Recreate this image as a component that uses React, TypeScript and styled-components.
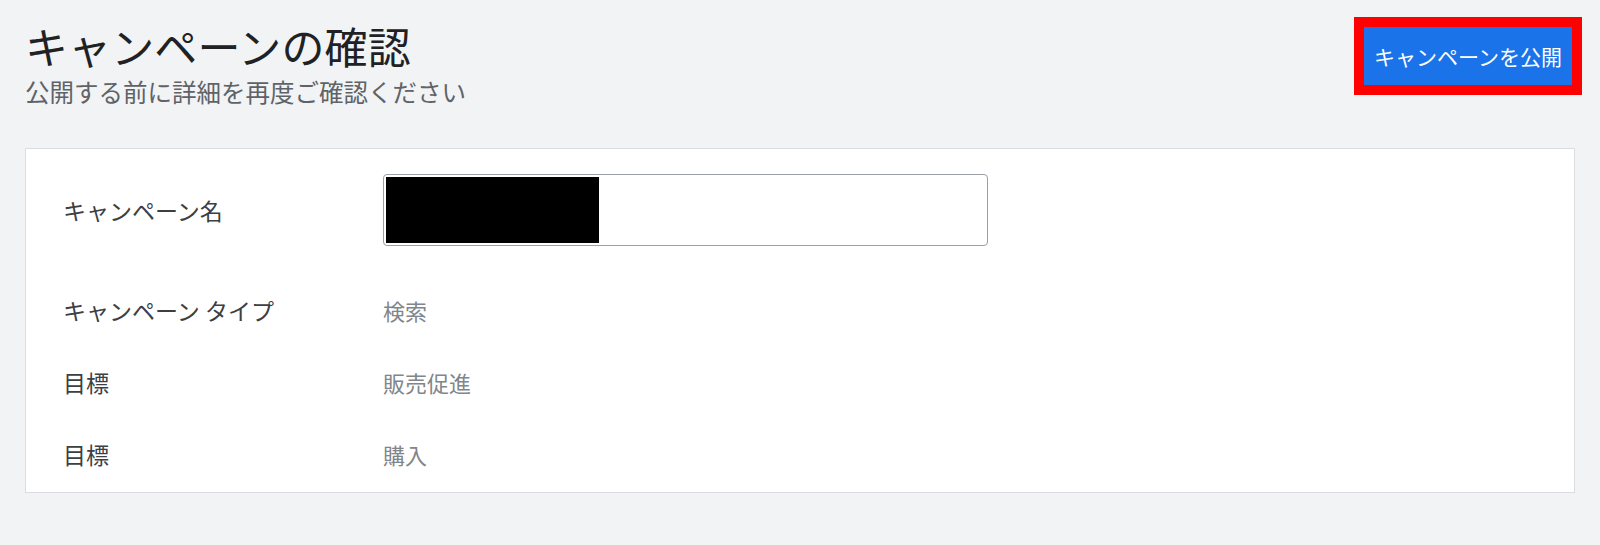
import React from "react";
import styled, { createGlobalStyle } from "styled-components";

const GlobalStyle = createGlobalStyle`
  html, body {
    margin: 0;
    padding: 0;
    background: #f1f3f4;
  }
  body {
    font-family: "Noto Sans CJK JP", "Noto Sans", sans-serif;
    width: 1600px;
    height: 545px;
    overflow: hidden;
  }
`;

const Page = styled.div`
  display: flex;
  flex-direction: column;
  background: #f1f3f4;
  min-height: 545px;
`;

const Header = styled.header`
  display: flex;
  justify-content: space-between;
  align-items: flex-start;
  padding: 17px 18px 0 25px;
`;

const TitleBlock = styled.div`
  display: flex;
  flex-direction: column;
  gap: 8px;
  padding-top: 4px;
`;

const Title = styled.h1`
  margin: 0;
  font-size: 43px;
  line-height: 49px;
  font-weight: 400;
  color: #202124;
  letter-spacing: 0.1px;
`;

const Subtitle = styled.p`
  margin: 0;
  font-size: 24.5px;
  line-height: 28px;
  color: #5f6368;
`;

const Highlight = styled.div`
  display: flex;
  border: 10px solid #ff0000;
`;

const PrimaryButton = styled.button`
  height: 58px;
  padding: 0 10px;
  border: none;
  background: #1a73e8;
  color: #ffffff;
  font-family: inherit;
  font-size: 21px;
  line-height: 58px;
  white-space: nowrap;
  cursor: pointer;
`;

const Card = styled.section`
  margin: 42px 25px 0 25px;
  background: #ffffff;
  border: 1px solid #dadce0;
  padding: 25px 0 2px 37px;
  display: flex;
  flex-direction: column;
`;

const Row = styled.div<{ $spaced?: boolean }>`
  display: grid;
  grid-template-columns: 320px 1fr;
  align-items: center;
  min-height: 72px;
  margin-top: ${(p) => (p.$spaced ? "28px" : "0")};
`;

const Label = styled.div`
  font-size: 23px;
  line-height: 30px;
  color: #3c4043;
  white-space: pre;
`;

const Value = styled.div`
  font-size: 22px;
  line-height: 30px;
  color: #80868b;
`;

const InputBox = styled.div`
  width: 605px;
  height: 72px;
  box-sizing: border-box;
  border: 1.5px solid #9aa0a6;
  border-radius: 4px;
  padding: 2px;
  display: flex;
  background: #ffffff;
`;

const Redaction = styled.div`
  width: 213px;
  height: 100%;
  background: #000000;
`;

const rows = [
  { label: "キャンペーン タイプ", value: "検索" },
  { label: "目標", value: "販売促進" },
  { label: "目標", value: "購入" },
];

export default function App() {
  return (
    <>
      <GlobalStyle />
      <Page>
        <Header>
          <TitleBlock>
            <Title>キャンペーンの確認</Title>
            <Subtitle>公開する前に詳細を再度ご確認ください</Subtitle>
          </TitleBlock>
          <Highlight>
            <PrimaryButton>キャンペーンを公開</PrimaryButton>
          </Highlight>
        </Header>
        <Card>
          <Row>
            <Label>キャンペーン名</Label>
            <InputBox>
              <Redaction />
            </InputBox>
          </Row>
          {rows.map((r, i) => (
            <Row key={i} $spaced={i === 0}>
              <Label>{r.label}</Label>
              <Value>{r.value}</Value>
            </Row>
          ))}
        </Card>
      </Page>
    </>
  );
}
